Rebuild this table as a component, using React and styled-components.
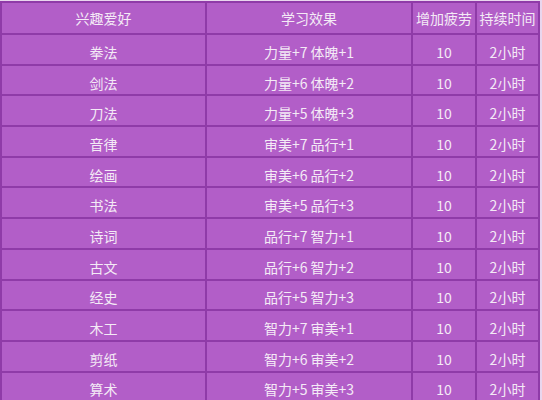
import React from 'react';
import styled, { createGlobalStyle } from 'styled-components';

const GlobalStyle = createGlobalStyle`
    html, body {
        margin: 0;
        padding: 0;
        background: #e9d6ee;
    }
    body {
        font-family: "Microsoft YaHei", "Noto Sans CJK SC", "Noto Sans", sans-serif;
    }
`;

const Page = styled.div`
    width: 542px;
    height: 400px;
    overflow: hidden;
    padding-top: 1px;
    box-sizing: border-box;
`;

const Table = styled.table`
    width: 538px;
    border-collapse: collapse;
    table-layout: fixed;
    background: #b25ec8;
    color: #f4eaf6;
    font-size: 14px;
`;

const Col = styled.col`
    width: ${props => props.w}px;
`;

const Cell = styled.td`
    height: 23.7px;
    padding: 5px 0 0;
    border: 2px solid #8f3ba8;
    text-align: center;
    vertical-align: middle;
    line-height: 22px;
    white-space: nowrap;
`;

const HeadCell = styled(Cell).attrs({ as: 'th' })`
    font-weight: normal;
    height: 30px;
    padding: 0;
    line-height: 24px;
`;

const rows = [
    ['拳法', '力量+7 体魄+1'],
    ['剑法', '力量+6 体魄+2'],
    ['刀法', '力量+5 体魄+3'],
    ['音律', '审美+7 品行+1'],
    ['绘画', '审美+6 品行+2'],
    ['书法', '审美+5 品行+3'],
    ['诗词', '品行+7 智力+1'],
    ['古文', '品行+6 智力+2'],
    ['经史', '品行+5 智力+3'],
    ['木工', '智力+7 审美+1'],
    ['剪纸', '智力+6 审美+2'],
    ['算术', '智力+5 审美+3'],
];

export default function App() {
    return (
        <Page>
            <GlobalStyle />
            <Table>
                <colgroup>
                    <Col w={205} />
                    <Col w={206} />
                    <Col w={64} />
                    <Col w={63} />
                </colgroup>
                <thead>
                    <tr>
                        <HeadCell>兴趣爱好</HeadCell>
                        <HeadCell>学习效果</HeadCell>
                        <HeadCell>增加疲劳</HeadCell>
                        <HeadCell>持续时间</HeadCell>
                    </tr>
                </thead>
                <tbody>
                    {rows.map(([name, effect]) => (
                        <tr key={name}>
                            <Cell>{name}</Cell>
                            <Cell>{effect}</Cell>
                            <Cell>10</Cell>
                            <Cell>2小时</Cell>
                        </tr>
                    ))}
                </tbody>
            </Table>
        </Page>
    );
}
